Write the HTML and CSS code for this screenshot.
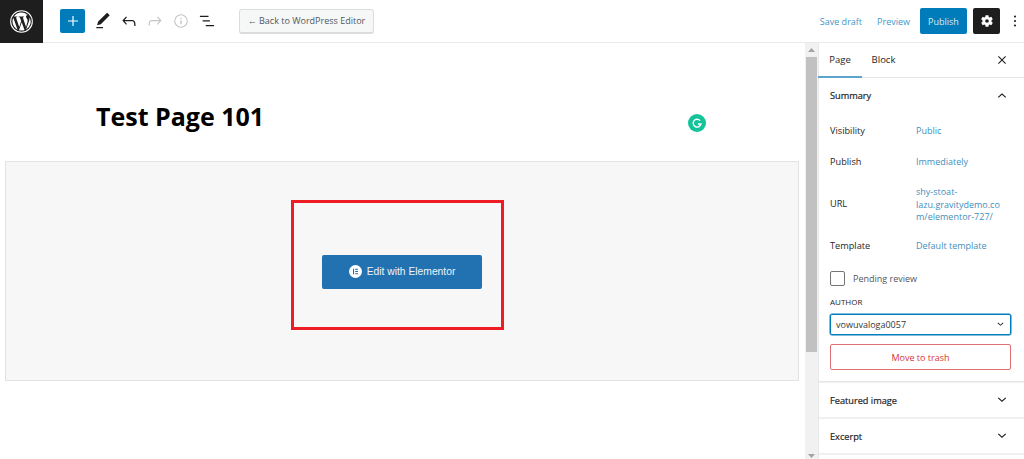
FILE: index.html
```html
<!DOCTYPE html>
<html lang="en">
<head>
<meta charset="utf-8">
<title>Test Page 101</title>
<link rel="stylesheet" href="styles.css">
</head>
<body>
<div class="app">
  <header class="topbar">
    <div class="logo">
      <svg width="23" height="23" viewBox="0 0 24 24"><circle cx="12" cy="12" r="11.300" fill="none" stroke="#fff" stroke-width="1.100"/><path fill="#fff" d="M2.600 12c0 3.700 2.200 7 5.300 8.500L3.400 8.200A9.400 9.400 0 0 0 2.600 12zm15.800-.5c0-1.200-.4-2-.8-2.600-.5-.8-.9-1.400-.9-2.200 0-.8.600-1.600 1.500-1.600h.1A9.400 9.400 0 0 0 4.100 6.800h.6c1 0 2.500-.1 2.500-.1.500 0 .6.700.1.800 0 0-.5.100-1.100.100l3.400 10.200 2.100-6.200-1.500-4c-.5 0-1-.1-1-.1-.5 0-.4-.8.100-.8 0 0 1.500.1 2.500.1s2.500-.1 2.500-.1c.5 0 .6.700.1.800 0 0-.5.100-1.100.100l3.400 10.100.9-3.100c.4-1.200.7-2.200.7-2.900zM12.200 12.800l-2.800 8.200a9.400 9.400 0 0 0 5.800-.2l-.1-.1-2.900-7.900zm8.100-5.300c0 .3.100.7.100 1 0 1-.2 2.100-.7 3.500l-2.900 8.300A9.400 9.400 0 0 0 20.300 7.500z"/></svg>
    </div>
    <div class="tools">
      <button class="add" aria-label="Add block"><svg width="20" height="20" viewBox="0 0 24 24"><path fill="#fff" d="M18 11.300h-5.300V6h-1.400v5.300H6v1.400h5.300V18h1.400v-5.300H18z"/></svg></button>
      <svg class="tool" width="20" height="20" viewBox="0 0 24 24"><path fill="#1e1e1e" d="M20.100 5.100 16.900 2 6.200 12.700l-1.300 4.400 4.500-1.300L20.100 5.100zM4 20.800h8v-1.500H4v1.500z"/></svg>
      <svg class="tool" width="20" height="20" viewBox="0 0 24 24"><path fill="#1e1e1e" d="M18.300 11.700c-.6-.6-1.400-.9-2.300-.9H6.700l2.900-3.300-1.100-1-4.500 5L8.500 16.500l1-1-2.700-3.200H16c.5 0 .9.200 1.300.5 1 1 1 3.400 1 4.500v.7h1.500V17c0-1.300 0-3.900-1.500-5.300z"/></svg>
      <svg class="tool" width="20" height="20" viewBox="0 0 24 24"><path fill="#c4c4c4" d="M15.600 6.500l-1.100 1 2.900 3.300H8c-.9 0-1.700.3-2.300.9-1.400 1.500-1.400 4.200-1.400 5.600v.2h1.500v-.3c0-1.100 0-3.500 1-4.500.3-.3.700-.5 1.300-.5h9.200L14.300 15.500l1 1 4.500-5-4.200-5z"/></svg>
      <svg class="tool" width="20" height="20" viewBox="0 0 24 24"><circle cx="12" cy="12" r="7.500" fill="none" stroke="#c4c4c4" stroke-width="1.300"/><path fill="#c4c4c4" d="M11.200 11h1.600v5h-1.600zM11.200 8h1.600v1.600h-1.600z"/></svg>
      <svg class="tool" width="20" height="20" viewBox="0 0 24 24"><path fill="#1e1e1e" d="M13.800 5.800H3.500v1.500h10.300V5.800zM15.500 11.200H6.800v1.500h8.700v-1.500zM20.500 16.700H10.500v1.500h10v-1.500z"/></svg>
    </div>
    <button class="back">← Back to WordPress Editor</button>
    <div class="actions">
      <span class="link">Save draft</span>
      <span class="link">Preview</span>
      <button class="publish">Publish</button>
      <button class="gear" aria-label="Settings"><svg width="20" height="20" viewBox="0 0 24 24"><path fill="#fff" fill-rule="evenodd" d="M10.300 5h3.400l.4 2.100 1.100.6 2-.7 1.700 3-1.600 1.400v1.200l1.600 1.400-1.700 3-2-.7-1.100.6-.4 2.100h-3.400l-.4-2.100-1.100-.6-2 .7-1.700-3 1.600-1.400v-1.200L5 10l1.700-3 2 .7 1.100-.6zM12 9.800a2.200 2.200 0 1 0 0 4.400 2.200 2.200 0 0 0 0-4.400z"/></svg></button>
      <svg class="more" width="6" height="14" viewBox="0 0 6 14"><circle cx="3" cy="2.500" r="1.050" fill="#1e1e1e"/><circle cx="3" cy="7" r="1.050" fill="#1e1e1e"/><circle cx="3" cy="11.500" r="1.050" fill="#1e1e1e"/></svg>
    </div>
  </header>
  <div class="body">
    <main class="editor">
      <h1 class="title">Test Page 101</h1>
      <span class="grammarly"><svg width="18" height="18" viewBox="0 0 18 18"><circle cx="9" cy="9" r="9" fill="#15c39a"/><path fill="none" stroke="#fff" stroke-width="1.400" d="M12 6.600A3.900 3.900 0 1 0 12.900 10H9.900"/></svg></span>
      <section class="panel">
        <div class="highlight">
          <button class="elementor">
            <svg width="13" height="13" viewBox="0 0 13 13"><circle cx="6.500" cy="6.500" r="6.500" fill="#fff"/><path fill="#2271b1" d="M4 3.700h1.100v5.600H4zM6.200 3.700H9v1.100H6.200zM6.200 5.950H9v1.100H6.200zM6.200 8.200H9v1.100H6.200z"/></svg>
            Edit with Elementor
          </button>
        </div>
      </section>
    </main>
    <div class="scrollbar">
      <svg class="arrow" width="7" height="4" viewBox="0 0 7 4"><path fill="#a3a3a3" d="M3.500 0 7 4H0z"/></svg>
      <div class="thumb"></div>
      <svg class="arrow-down" width="7" height="4" viewBox="0 0 7 4"><path fill="#a3a3a3" d="M3.500 4 7 0H0z"/></svg>
    </div>
    <aside class="sidebar">
      <div class="tabs">
        <span class="tab active">Page</span>
        <span class="tab">Block</span>
        <svg class="close" width="18" height="18" viewBox="0 0 24 24"><path fill="#1e1e1e" d="M13 12l4.300-4.300-1-1L12 11 7.700 6.700l-1 1L11 12l-4.300 4.300 1 1L12 13l4.300 4.300 1-1z"/></svg>
      </div>
      <section class="summary">
        <div class="section-head"><h2>Summary</h2><svg width="18" height="18" viewBox="0 0 24 24"><path fill="#1e1e1e" d="M6.500 14.500l1.100 1 4.400-4 4.400 4 1.100-1L12 9.500z"/></svg></div>
        <dl class="rows">
          <div class="row row-public"><dt>Visibility</dt><dd>Public</dd></div>
          <div class="row row-publish"><dt>Publish</dt><dd>Immediately</dd></div>
          <div class="row row-url"><dt>URL</dt><dd>shy-stoat-lazu.gravitydemo.com/elementor-727/</dd></div>
          <div class="row row-template"><dt>Template</dt><dd>Default template</dd></div>
        </dl>
        <label class="check"><span class="box"></span>Pending review</label>
        <div class="author-label">AUTHOR</div>
        <div class="select">vowuvaloga0057<svg width="13" height="13" viewBox="0 0 24 24"><path fill="#1e1e1e" d="M17.500 9.500l-1.100-1-4.400 4-4.400-4-1.100 1L12 14.500z"/></svg></div>
        <button class="trash">Move to trash</button>
      </section>
      <div class="section-head collapsed featured"><h2>Featured image</h2><svg width="18" height="18" viewBox="0 0 24 24"><path fill="#1e1e1e" d="M17.500 9.500l-1.100-1-4.400 4-4.400-4-1.100 1L12 14.500z"/></svg></div>
      <div class="section-head collapsed excerpt"><h2>Excerpt</h2><svg width="18" height="18" viewBox="0 0 24 24"><path fill="#1e1e1e" d="M17.500 9.500l-1.100-1-4.400 4-4.400-4-1.100 1L12 14.500z"/></svg></div>
      <div class="rest"></div>
    </aside>
  </div>
</div>
</body>
</html>
```
FILE: styles.css
```css
* { box-sizing: border-box; }
html, body { margin: 0; height: 100%; overflow: hidden; background: #fff; }
body { font-family: "Open Sans", "Noto Sans", sans-serif; color: #1e1e1e; font-size: 9px; }
button { font-family: inherit; cursor: pointer; }
.app { display: flex; flex-direction: column; height: 459px; }

.topbar { flex: none; display: flex; align-items: center; height: 43px; border-bottom: 1px solid #eaeaea; }
.logo { width: 43px; height: 43px; margin-bottom: -1px; background: #1e1e1e; display: flex; align-items: center; justify-content: center; position: relative; }
.tools { display: flex; align-items: center; margin-left: 17px; }
.add { width: 25px; height: 24px; padding: 0; border: 0; border-radius: 2px; background: #007cba; display: flex; align-items: center; justify-content: center; margin-right: 8px; }
.tool { margin-right: 6px; flex: none; }
.back { margin-left: 16px; width: 135px; height: 25px; padding: 0; border: 1px solid #dcdcde; border-bottom-width: 2px; border-radius: 3px; background: #f6f7f7; color: #50575e; font-size: 9px; white-space: nowrap; }
.actions { margin-left: auto; display: flex; align-items: center; }
.link { color: #3f97c7; font-size: 9px; margin-right: 15px; }
.link + .link { margin-right: 10px; }
.publish { width: 47px; height: 26px; padding: 0; border: 0; border-radius: 2px; background: #007cba; color: #d9edf7; font-size: 9px; margin-right: 6px; }
.gear { width: 27px; height: 26px; padding: 0; border: 0; border-radius: 2px; background: #1e1e1e; display: flex; align-items: center; justify-content: center; margin-right: 12px; }
.more { margin-right: 6px; }

.body { flex: 1; display: flex; min-height: 0; }
.editor { width: 805px; flex: none; padding-top: 56px; position: relative; overflow: hidden; }
.title { margin: 0 0 0 96px; font-size: 25px; line-height: 34px; font-weight: 700; color: #000; }
.grammarly { position: absolute; left: 687.500px; top: 71px; width: 18px; height: 18px; display: block; }
.panel { margin: 28px 0 0 5px; width: 794px; height: 220px; background: #f7f7f7; border: 1px solid #e3e3e3; display: flex; justify-content: center; }
.highlight { margin: 38px 0 0 -10px; width: 213px; height: 130px; border: 3px solid #ee1c25; padding: 13px 0 0 10px; display: flex; align-items: center; justify-content: center; }
.elementor { width: 160px; height: 34px; border: 0; padding: 0; border-radius: 2px; background: #2271b1; color: #eef4fa; font-family: "Liberation Sans", Arial, sans-serif; font-size: 10.300px; display: flex; align-items: center; justify-content: center; gap: 5px; }

.scrollbar { width: 13px; flex: none; background: #f1f1f1; display: flex; flex-direction: column; align-items: center; }
.arrow { margin: 5px 0 5px; flex: none; }
.arrow-down { margin-top: auto; margin-bottom: 1px; flex: none; }
.thumb { width: 11px; height: 295px; background: #c1c1c1; flex: none; }

.sidebar { flex: 1; min-width: 0; border-left: 1px solid #e8e8e8; display: flex; flex-direction: column; background: #f0f0f0; }
.tabs { flex: none; height: 35px; background: #fff; border-bottom: 1px solid #e2e4e7; display: flex; align-items: center; position: relative; }
.tab { width: 43px; height: 35px; line-height: 33px; text-align: center; font-size: 9.500px; margin-bottom: -1px; }
.tab.active { border-bottom: 2px solid #5ba5cf; margin-left: -1px; width: 44px; }
.close { position: absolute; left: 174px; top: 8px; }
.summary { flex: none; background: #fff; padding: 0 13px 0 11px; height: 304px; border-bottom: 1px solid #e6e6e6; }
.section-head { display: flex; align-items: center; justify-content: space-between; height: 34px; }
.section-head h2 { margin: 0; font-size: 9.200px; font-weight: 400; -webkit-text-stroke: .2px #1e1e1e; }
.section-head svg { flex: none; }
.rows { margin: 0; padding-top: 6px; }
.row { display: flex; align-items: center; }
.row dt { width: 86px; flex: none; font-size: 9.200px; }
.row dd { margin: 0; padding-top: 2px; color: #3f8fbd; width: 85px; line-height: 12.500px; overflow-wrap: anywhere; }
.row-public { height: 24px; }
.row-publish { height: 24px; margin-top: 7px; }
.row-url { height: 38px; margin-top: 11px; }
.row-url dd { padding-top: 4px; }
.row-template { height: 24px; margin-top: 11px; }
.check { display: flex; align-items: center; gap: 8px; height: 16px; margin-top: 13px; color: #50575e; }
.box { width: 15px; height: 15px; border: 1px solid #757575; border-radius: 2px; background: #fff; }
.author-label { font-size: 8px; line-height: 11px; margin-top: 10px; }
.select { margin-top: 7px; height: 21px; border: 1px solid #007cba; box-shadow: 0 0 0 .5px #007cba; border-radius: 2px; padding: 0 3px 0 5px; display: flex; align-items: center; justify-content: space-between; color: #32373c; }
.trash { display: block; width: 100%; margin-top: 9px; height: 26px; padding: 0; background: #fff; border: 1px solid #e26f73; border-radius: 2px; color: #d63638; font-size: 9px; }
.collapsed { flex: none; background: #fff; padding: 0 13px 0 11px; }
.featured { margin-top: 1px; }
.excerpt { margin-top: 2px; }
.rest { flex: 1; margin-top: 2px; background: #fff; }
```
